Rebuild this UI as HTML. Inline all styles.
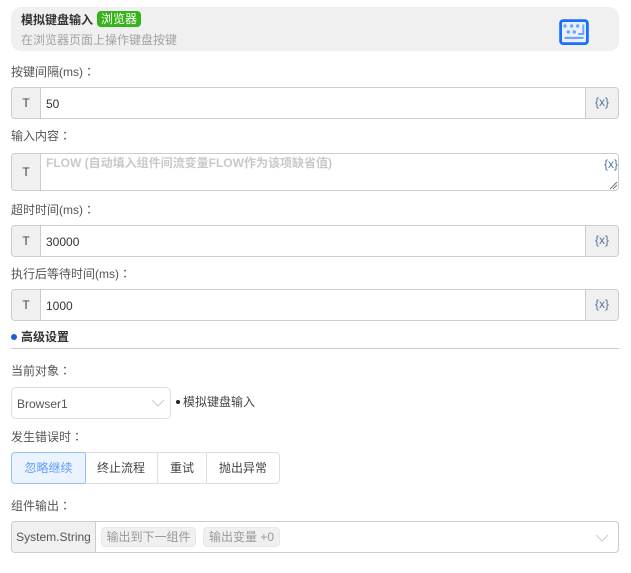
<!DOCTYPE html>
<html><head><meta charset="utf-8"><style>
html,body{margin:0;padding:0;background:#fff}
body{width:631px;height:573px;overflow:hidden;position:relative;font-family:"Liberation Sans","Noto Sans CJK SC",sans-serif;font-size:12px;color:#333}
.a{position:absolute;white-space:nowrap;line-height:16px}
.lb{left:11px;color:#555}
.c{font-family:"Noto Sans CJK TC",sans-serif}
.box{position:absolute;left:11px;width:606px;border:1px solid #ccc;border-radius:4px;background:#fff;overflow:hidden}
.t{position:absolute;left:0;top:0;bottom:0;width:28px;background:#f0f0f0;border-right:1px solid #ccc;text-align:center;color:#444;display:flex;align-items:center;justify-content:center}
.x{position:absolute;right:0;top:0;bottom:0;width:32px;background:#f0f0f0;border-left:1px solid #ccc;text-align:center;line-height:28px;font-size:12px;color:#4f7396}
.v{position:absolute;left:34px;top:8px;line-height:16px;color:#333}
.btn{position:absolute;top:452px;height:30px;border:1px solid #dcdfe6;border-left:0;line-height:30px;text-align:center;color:#444}
.tag{position:absolute;top:5px;height:18px;line-height:18px;background:#f0f0f0;border:1px solid #e8e8e8;border-radius:4px;color:#999;text-align:center}
</style></head><body>
<div style="position:absolute;left:11px;top:7px;width:608px;height:44px;background:#f0f0f0;border-radius:10px"></div>
<div class="a" style="left:21px;top:12px;font-weight:bold;color:#333">模拟键盘输入</div>
<div class="a" style="left:97px;top:11px;width:44px;height:16px;line-height:17px;background:#36b31a;border-radius:4px;color:#fff;text-align:center">浏览器</div>
<div class="a" style="left:21px;top:32px;color:#a3a3a3">在浏览器页面上操作键盘按键</div>
<svg style="position:absolute;left:559px;top:19px" width="30" height="27" viewBox="0 0 30 27">
<rect x="1.6" y="1.6" width="26.8" height="23" rx="2.5" fill="#e8f0fc" stroke="#1a6dff" stroke-width="2.8"/>
<g fill="#6ea4ff"><circle cx="6" cy="7" r="1.7"/><circle cx="12.7" cy="7" r="1.7"/><circle cx="18.7" cy="7" r="1.7"/><circle cx="9.3" cy="13" r="1.7"/><circle cx="15.3" cy="13" r="1.7"/></g>
<path d="M24.3 5.5v9.5h-5" fill="none" stroke="#6ea4ff" stroke-width="2"/><rect x="5.5" y="17.8" width="19" height="2.2" fill="#6ea4ff"/></svg>

<div class="a lb" style="top:64px">按键间隔(ms)<span class="c">：</span></div>
<div class="box" style="top:87px;height:30px"><div class="t">T</div><div class="v">50</div><div class="x">{x}</div></div>
<div class="a lb" style="top:128px">输入内容<span class="c">：</span></div>
<div class="box" style="top:153px;height:36px"><div class="t">T</div><div class="v" style="top:1px;font-weight:bold;color:#c9c9c9">FLOW (自动填入组件间流变量FLOW作为该项缺省值)</div>
<div class="a" style="right:0;top:2px;font-size:12px;color:#4f7396">{x}</div>
<svg style="position:absolute;right:0;bottom:0" width="10" height="10"><path d="M2 9L9 2M5 9L9 5" stroke="#777" stroke-width="1" fill="none"/></svg></div>
<div class="a lb" style="top:202px">超时时间(ms)<span class="c">：</span></div>
<div class="box" style="top:225px;height:30px"><div class="t">T</div><div class="v">30000</div><div class="x">{x}</div></div>
<div class="a lb" style="top:266px">执行后等待时间(ms)<span class="c">：</span></div>
<div class="box" style="top:289px;height:30px"><div class="t">T</div><div class="v">1000</div><div class="x">{x}</div></div>

<div class="a" style="left:11px;top:334px;width:6px;height:6px;background:#1a5fd0;border-radius:50%"></div>
<div class="a" style="left:21px;top:329px;font-weight:bold;color:#333">高级设置</div>
<div style="position:absolute;left:11px;top:348px;width:608px;height:1px;background:#ccc"></div>
<div class="a lb" style="top:363px">当前对象<span class="c">：</span></div>
<div style="position:absolute;left:11px;top:387px;width:158px;height:30px;border:1px solid #dcdfe6;border-radius:5px"></div>
<div class="a" style="left:17px;top:396px;color:#555">Browser1</div>
<svg style="position:absolute;left:151px;top:398px" width="14" height="10"><path d="M1 2l6 6 6-6" fill="none" stroke="#c8ccd4" stroke-width="1"/></svg>
<div class="a" style="left:176px;top:400px;width:4px;height:4px;background:#222;border-radius:50%"></div>
<div class="a" style="left:183px;top:394px;color:#444">模拟键盘输入</div>
<div class="a lb" style="top:429px">发生错误时<span class="c">：</span></div>
<div class="btn" style="left:11px;width:73px;border:1px solid #93c2fb;border-radius:4px 0 0 4px;background:#ebf3ff;color:#5c9dfa">忽略继续</div>
<div class="btn" style="left:85px;width:72px">终止流程</div>
<div class="btn" style="left:158px;width:48px">重试</div>
<div class="btn" style="left:207px;width:72px;border-radius:0 4px 4px 0">抛出异常</div>
<div class="a lb" style="top:498px">组件输出<span class="c">：</span></div>
<div class="box" style="top:521px;height:30px">
<div class="t" style="width:83px;color:#555">System.String</div>
<div class="tag" style="left:89px;width:93px">输出到下一组件</div>
<div class="tag" style="left:191px;width:75px">输出变量 +0</div>
<svg style="position:absolute;left:583px;top:11px" width="14" height="10"><path d="M1 2l6 6 6-6" fill="none" stroke="#c8ccd4" stroke-width="1"/></svg>
</div>
</body></html>
